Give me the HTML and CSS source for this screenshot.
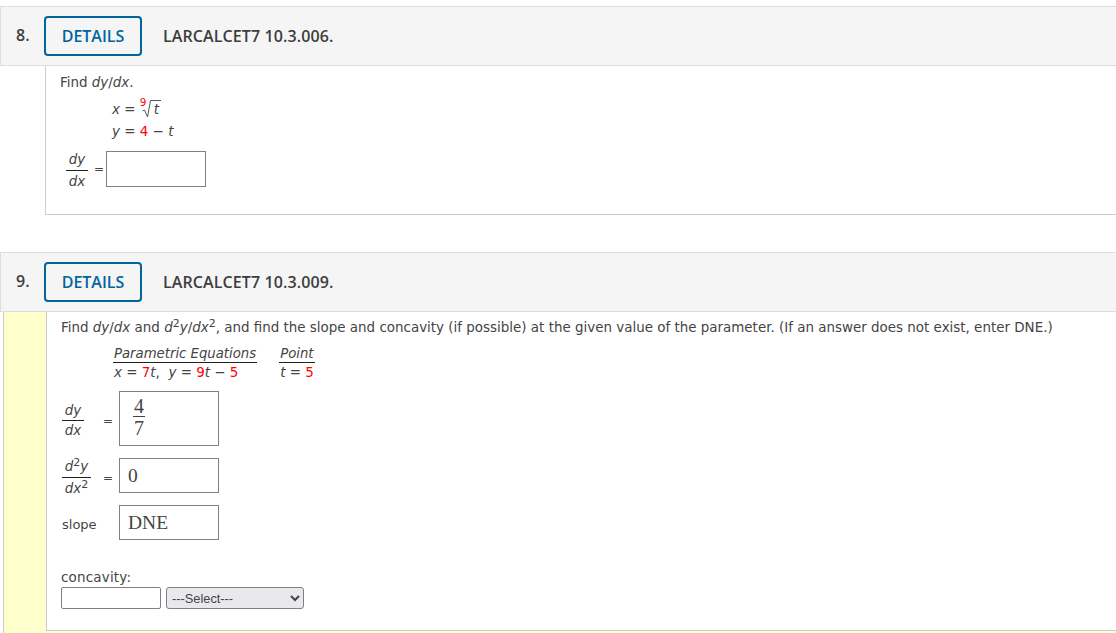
FILE: index.html
```html
<!DOCTYPE html>
<html lang="en">
<head>
<meta charset="utf-8">
<title>Questions</title>
<link rel="stylesheet" href="styles.css">
</head>
<body>
<section class="question q8">
  <header class="qhead">
    <span class="qnum">8.</span>
    <button class="details">DETAILS</button>
    <span class="qtitle">LARCALCET7 10.3.006.</span>
  </header>
  <div class="qbody plain">
    <div class="content c8">
      <p class="line">Find <i>dy</i>/<i>dx</i>.</p>
      <div class="eqs">
        <div class="eq"><i>x</i> = <span class="root"><span class="idx red">9</span><svg class="rad" width="19" height="18" viewBox="0 0 19 18"><path d="M0.5 11 L2.5 10 L5.5 17 L8.5 0.5 L19 0.5" fill="none" stroke="#555" stroke-width="1"/></svg><i class="radicand">t</i></span></div>
        <div class="eq"><i>y</i> = <span class="red">4</span> &minus; <i>t</i></div>
      </div>
      <div class="row r-a">
        <span class="frac f8"><i class="num">dy</i><i class="den">dx</i></span>
        <span class="eqsign">=</span>
        <span class="box b8"></span>
      </div>
    </div>
  </div>
</section>
<section class="question q9">
  <header class="qhead">
    <span class="qnum">9.</span>
    <button class="details">DETAILS</button>
    <span class="qtitle">LARCALCET7 10.3.009.</span>
  </header>
  <div class="qbody marked">
    <div class="content c9">
      <p class="line">Find <i>dy</i>/<i>dx</i> and <i>d</i><sup>2</sup><i>y</i>/<i>dx</i><sup>2</sup>, and find the slope and concavity (if possible) at the given value of the parameter. (If an answer does not exist, enter DNE.)</p>
      <div class="ptable">
        <div class="pcol pc1"><i class="ph">Parametric Equations</i><span class="pv"><i>x</i> = <span class="red">7</span><i>t</i>,&nbsp; <i>y</i> = <span class="red">9</span><i>t</i> &minus; <span class="red">5</span></span></div>
        <div class="pcol pc2"><i class="ph">Point</i><span class="pv"><i>t</i> = <span class="red">5</span></span></div>
      </div>
      <div class="row r1">
        <span class="lab"><span class="frac"><i class="num">dy</i><i class="den">dx</i></span></span>
        <span class="eqsign">=</span>
        <span class="box tall"><span class="ans-frac"><span>4</span><span class="ad">7</span></span></span>
      </div>
      <div class="row r2">
        <span class="lab"><span class="frac"><span class="num"><i>d</i><sup>2</sup><i>y</i></span><span class="den"><i>dx</i><sup>2</sup></span></span></span>
        <span class="eqsign">=</span>
        <span class="box ans">0</span>
      </div>
      <div class="row r3">
        <span class="lab slope">slope</span>
        <span class="box ans">DNE</span>
      </div>
      <div class="conc">
        <div class="conc-label">concavity:</div>
        <div class="conc-row">
          <span class="small-input"></span>
          <select class="sel"><option>---Select---</option></select>
        </div>
      </div>
    </div>
  </div>
</section>
</body>
</html>
```
FILE: styles.css
```css
html, body { margin: 0; padding: 0; background: #fff; height: 633px; overflow: hidden; }
body { font-family: "DejaVu Sans", Verdana, sans-serif; font-size: 13.44px; color: #444; }
.red { color: #f00; }
.question { display: block; }
.q8 { padding-top: 6px; }
.q9 { margin-top: 37px; }
.qhead {
  display: flex; align-items: center; height: 58px;
  background: #f5f5f5; border: 1px solid #ddd; border-right: 0;
  font-family: "Open Sans", sans-serif; font-weight: 600; font-size: 16px; color: #3d3d3d;
}
.qnum { width: 43px; padding-left: 15px; box-sizing: border-box; font-size: 16px; position: relative; top: -1px; }
.details {
  width: 98px; height: 40px; box-sizing: border-box; margin: 0; padding: 0;
  border: 2px solid #00659c; border-radius: 4px; background: #f5f5f5; color: #00659c;
  font: 600 16px "Open Sans", sans-serif;
}
.qtitle { margin-left: 21px; letter-spacing: 0.1px; }
.qbody.plain { padding-left: 45px; }
.qbody.marked { margin-left: 3px; background: #ffc; border-left: 1px solid #ccc; padding-left: 42px; height: 322px; }
.content { background: #fff; border-left: 1px solid #ccc; border-bottom: 1px solid #ccc; box-sizing: border-box; }
.c8 { height: 149px; padding: 8px 0 0 14px; }
.c9 { height: 319px; padding: 7px 0 0 14px; }
.line { margin: 0; line-height: 17px; white-space: nowrap; }
.line sup, .frac sup { font-size: 11px; line-height: 0; vertical-align: 5px; }
.eqs { margin: 10px 0 0 52px; }
.eq { height: 22px; line-height: 17px; white-space: nowrap; }
.root { display: inline-block; position: relative; padding-left: 7px; }
.idx { position: absolute; left: 0; top: -5px; font-size: 10.5px; line-height: 12px; }
.rad { position: absolute; left: 2px; top: -1px; }
.radicand { display: inline-block; margin-left: 6px; line-height: 15px; padding: 0 1px; }
.row { display: flex; align-items: center; }
.r-a { margin-top: 6px; margin-left: 6px; height: 36px; }
.frac { display: inline-flex; flex-direction: column; align-items: center; width: 22px; line-height: 17px; }
.frac .num { display: block; width: 100%; text-align: center; border-bottom: 1px solid #222; padding-bottom: 2px; white-space: nowrap; }
.frac .den { display: block; padding-top: 2px; white-space: nowrap; }
.f8 { padding-top: 2px; }
.eqsign { display: block; font-size: 12px; }
.r-a .eqsign { margin-left: 6px; width: 12px; }
.box { display: block; box-sizing: border-box; border: 1px solid #808080; background: #fff; width: 100px; height: 35px; font-family: "Liberation Serif", serif; color: #444; }
.b8 { height: 36px; }
.ptable { display: flex; margin: 9px 0 0 52px; }
.pcol { display: flex; flex-direction: column; white-space: nowrap; }
.pc2 { margin-left: 22px; }
.ph { border-bottom: 1px solid #222; line-height: 17px; padding: 0 1px; font-size: 13.25px; }
.pv { line-height: 18px; padding: 1px 0 0 1px; }
.r1 { margin-top: 9px; height: 55px; }
.r2 { margin-top: 12px; height: 35px; }
.r3 { margin-top: 12px; height: 35px; }
.lab { display: block; width: 42px; padding: 4px 0 0 1px; box-sizing: border-box; }
.r1 .num { padding-bottom: 1px; }
.r1 .den { padding-top: 1px; }
.r2 .frac { width: 29px; }
.r1 .frac { width: 22px; }
.r1 .eqsign, .r2 .eqsign { width: 16px; padding-top: 5px; }
.slope { width: 58px; padding: 4px 0 0 1px; font-size: 13px; }
.tall { height: 55px; padding: 4px 0 0 13px; }
.ans-frac { display: inline-flex; flex-direction: column; align-items: center; width: 12px; font-size: 20px; line-height: 20px; }
.ans-frac .ad { border-top: 1px solid #444; width: 100%; text-align: center; padding-top: 1px; }
.ans { padding-left: 8px; font-size: 19.5px; line-height: 33px; }
.conc { margin-top: 29px; }
.conc-label { line-height: 17px; letter-spacing: 0.2px; }
.conc-row { display: flex; align-items: center; margin-top: 1px; }
.small-input { display: block; box-sizing: border-box; width: 100px; height: 22px; background: #fff; border: 1px solid #808080; border-radius: 2px; }
.sel { margin: 0 0 0 5px; width: 138px; height: 22px; box-sizing: border-box; border: 1px solid #808080; border-radius: 3px; background: #e9e9ed; font: 12.8px "Liberation Sans", sans-serif; color: #444; padding: 0 0 0 1px; }
```
